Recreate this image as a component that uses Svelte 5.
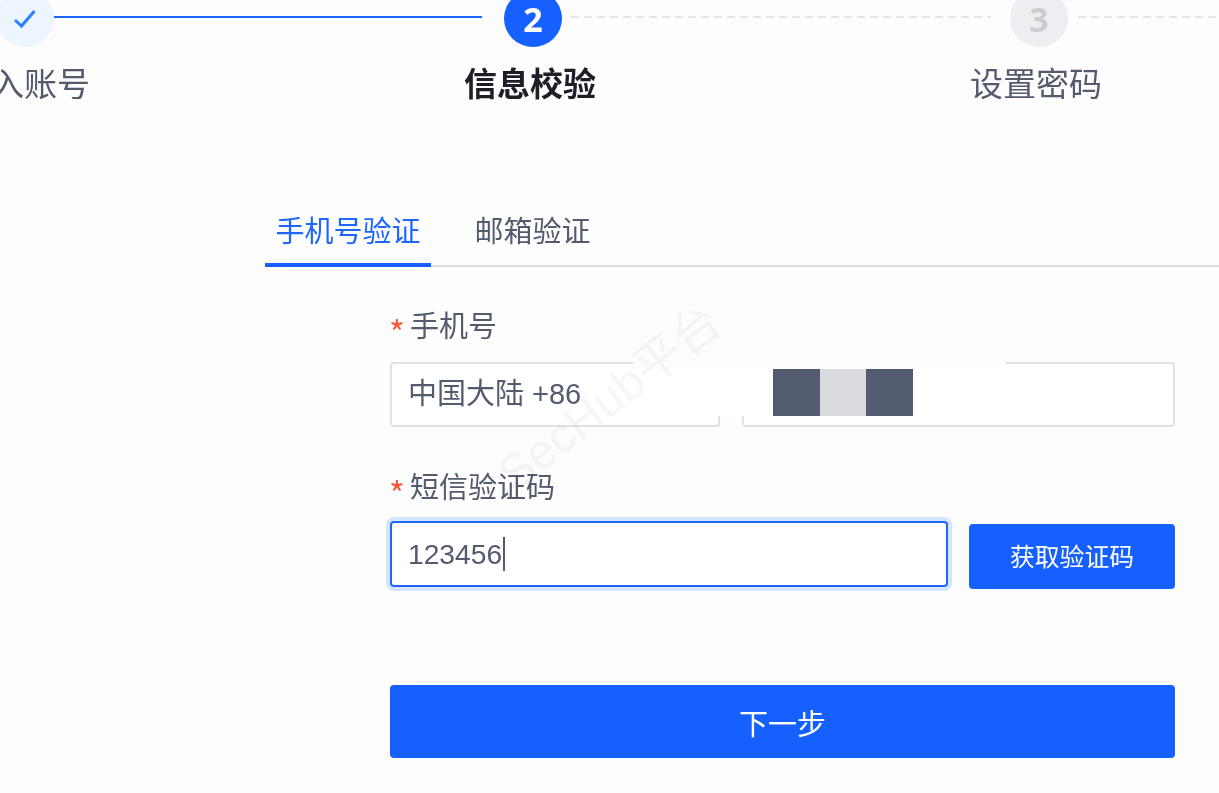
<script>
	let tabs = ['手机号验证', '邮箱验证'];
	let steps = ['输入账号', '信息校验', '设置密码'];
</script>

<div class="page">
	<!-- 步骤条 -->
	<div class="track">
		<span class="dot done">
			<svg width="26" height="22" viewBox="0 0 26 22" fill="none">
				<path d="M3 12 L9.5 18 L22.5 3" stroke="#2b80ff" stroke-width="3" />
			</svg>
		</span>
		<span class="line solid"></span>
		<span class="dot current">2</span>
		<span class="line dashed"></span>
		<span class="dot todo">3</span>
		<span class="line dashed tail"></span>
	</div>
	<div class="step-labels">
		{#each steps as step, i}
			<div class="step-label" class:active={i === 1}>{step}</div>
		{/each}
	</div>

	<!-- 验证方式 -->
	<div class="tabs">
		{#each tabs as tab, i}
			<div class="tab" class:active={i === 0}>{tab}</div>
		{/each}
	</div>

	<form class="form" on:submit|preventDefault>
		<div class="label"><span class="star">*</span>手机号</div>
		<div class="phone-row">
			<div class="input region">中国大陆 +86</div>
			<div class="input number"></div>
			<div class="mask">
				<i class="dark"></i><i class="light"></i><i class="dark"></i>
			</div>
		</div>

		<div class="label second"><span class="star">*</span>短信验证码</div>
		<div class="code-row">
			<div class="input focused">123456<span class="caret"></span></div>
			<button type="button" class="btn send">获取验证码</button>
		</div>

		<button type="submit" class="btn next">下一步</button>
	</form>

	<div class="watermark">SecHub平台</div>
</div>

<style>
	:global(body) {
		margin: 0;
		background: #fdfdfe;
	}

	.page {
		position: relative;
		width: 1219px;
		height: 793px;
		overflow: hidden;
		background: #fdfdfe;
		font-family: "Liberation Sans", "Noto Sans CJK SC", sans-serif;
		color: #535b6d;
		filter: blur(0.4px);
	}

	/* 步骤条 */
	.track {
		display: flex;
		align-items: center;
		margin: -10px 0 0 -4px;
		height: 57px;
		width: 1300px;
	}

	.dot {
		flex: none;
		width: 58px;
		height: 57px;
		border-radius: 50%;
		display: flex;
		align-items: center;
		justify-content: center;
		font-family: "Noto Sans", sans-serif;
		font-weight: 700;
		font-size: 34px;
	}

	.done {
		background: #edf5ff;
	}

	.current {
		background: #1660ff;
		color: #fff;
	}

	.todo {
		background: #edeef1;
		color: #cdcdcd;
	}

	.line {
		flex: none;
		width: 428px;
		margin-right: 22px;
		height: 2px;
		margin-top: -3px;
	}

	.solid {
		background: #1f66ff;
	}

	.dashed {
		background: repeating-linear-gradient(90deg, #e4e5e8 0 8px, transparent 8px 13px);
		margin-left: 9px;
		margin-right: 19px;
		width: 420px;
	}

	.tail {
		margin-left: 10px;
		margin-right: 0;
		width: 150px;
	}

	.step-labels {
		display: grid;
		grid-template-columns: repeat(3, 506px);
		margin: 16px 0 0 -229px;
		width: 1518px;
	}

	.step-label {
		text-align: center;
		font-size: 33px;
		line-height: 44px;
	}

	.step-label.active {
		color: #1c1f26;
		font-weight: 700;
	}

	/* tabs */
	.tabs {
		display: flex;
		margin: 86px 0 0 265px;
		border-bottom: 2px solid #dcdde1;
	}

	.tab {
		font-size: 29px;
		line-height: 40px;
		padding: 19px 10.5px 11px;
		margin-right: 33px;
		margin-bottom: -2px;
		border-bottom: 4px solid transparent;
	}

	.tab.active {
		color: #1f66ff;
		border-bottom-color: #1660ff;
	}

	/* 表单 */
	.form {
		display: flex;
		flex-direction: column;
		width: 785px;
		margin: 38px 0 0 390px;
	}

	.label {
		font-size: 29px;
		line-height: 44px;
		height: 40px;
		margin-bottom: 17px;
		display: flex;
	}

	.label.second {
		margin-top: 39px;
		margin-bottom: 15px;
	}

	.star {
		width: 20px;
		margin-left: -1px;
		margin-right: 1px;
		color: #f2583c;
		font-family: "Noto Sans CJK SC", sans-serif;
		font-size: 34px;
		line-height: 54px;
		height: 40px;
	}

	.phone-row {
		position: relative;
		display: flex;
		gap: 22px;
	}

	.input {
		box-sizing: border-box;
		height: 65px;
		background: #fff;
		border: 2px solid #e0e1e5;
		border-radius: 4px;
		padding: 0 16px;
		display: flex;
		align-items: center;
		font-size: 29px;
	}

	.region {
		width: 330px;
		padding-bottom: 7px;
	}

	.number {
		width: 433px;
	}

	/* 打码区域 */
	.mask {
		position: absolute;
		left: 243px;
		top: -17px;
		width: 373px;
		height: 71px;
		background: linear-gradient(#fdfdfe 0 24px, #fff 24px);
		box-sizing: border-box;
		padding: 24px 0 0 140px;
		display: flex;
		align-items: flex-start;
	}

	.mask i {
		width: 46.7px;
		height: 47px;
	}

	.dark {
		background: #525b6f;
	}

	.light {
		background: #dadbdf;
	}

	.code-row {
		display: flex;
		align-items: flex-start;
		gap: 21px;
	}

	.focused {
		flex: 1;
		height: 66px;
		border-color: #1f66ff;
		box-shadow: 0 0 0 4px #d5e5ff;
		font-size: 28.2px;
	}

	.caret {
		width: 1.5px;
		height: 34px;
		margin-left: 1px;
		background: #535b6d;
	}

	.btn {
		border: none;
		border-radius: 4px;
		background: #1660ff;
		color: #fff;
		font-family: inherit;
		padding: 0;
	}

	.send {
		flex: none;
		width: 206px;
		height: 65px;
		margin-top: 3px;
		padding-bottom: 4px;
		font-size: 24.8px;
	}

	.next {
		height: 73px;
		margin-top: 96px;
		font-size: 29px;
	}

	.watermark {
		position: absolute;
		left: 460px;
		top: 368px;
		width: 300px;
		text-align: center;
		transform: rotate(-38deg);
		font-size: 48px;
		line-height: 60px;
		color: rgba(60, 70, 90, 0.05);
		pointer-events: none;
		white-space: nowrap;
	}
</style>
